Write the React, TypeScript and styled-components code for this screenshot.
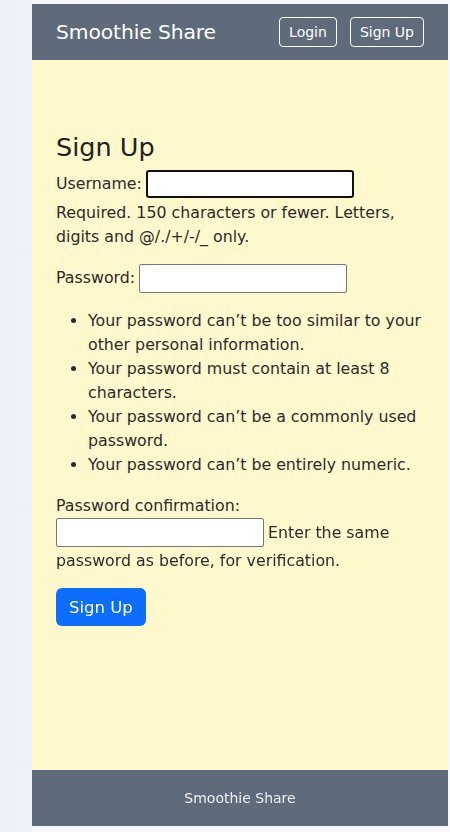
import React from "react";
import styled, { createGlobalStyle } from "styled-components";

const Global = createGlobalStyle`
  html, body { margin: 0; padding: 0; }
  body {
    background: #f6f8fc;
    font-family: "DejaVu Sans", "Liberation Sans", sans-serif;
    color: #2b2b2b;
  }
  * { box-sizing: border-box; }
`;

const Page = styled.div`
  display: flex;
  min-height: 832px;
`;

const Side = styled.div`
  width: 32px;
  flex: none;
  background: linear-gradient(90deg, #ebeff8, #eef1f8);
`;

const Main = styled.div`
  width: 416px;
  flex: none;
  display: flex;
  flex-direction: column;
  margin-top: 4px;
  margin-bottom: 6px;
`;

const Header = styled.header`
  height: 56px;
  background: #5e6b7b;
  display: flex;
  align-items: center;
  justify-content: space-between;
  padding: 0 24px;
`;

const Brand = styled.div`
  color: #ffffff;
  font-size: 20.3px;
  letter-spacing: -0.1px;
`;

const Nav = styled.nav`
  display: flex;
  gap: 13px;
  margin-top: -1px;
`;

const NavButton = styled.button`
  height: 30px;
  padding: 0 9px;
  border: 1px solid #ffffff;
  border-radius: 4px;
  background: transparent;
  color: #ffffff;
  font-family: inherit;
  font-size: 14px;
`;

const Content = styled.main`
  flex: 1;
  background: #fff8cd;
  padding: 72px 24px 24px;
  font-size: 15.8px;
  line-height: 24px;
`;

const Title = styled.h1`
  margin: 0 0 6px;
  font-size: 25.5px;
  font-weight: 400;
  line-height: 30px;
  color: #222;
`;

const Field = styled.p<{ $gap?: number }>`
  margin: 0 0 ${(p) => p.$gap ?? 16}px;
`;

const Label = styled.label<{ $block?: boolean }>`
  display: ${(p) => (p.$block ? "block" : "inline")};
  margin-right: 4px;
`;

const Input = styled.input<{ $focused?: boolean; $m?: string }>`
  width: 208px;
  height: ${(p) => (p.$focused ? "28px" : "29px")};
  vertical-align: middle;
  background: #fff;
  border: ${(p) => (p.$focused ? "2px solid #111" : "1px solid #777")};
  border-radius: ${(p) => (p.$focused ? "3px" : "2px")};
  outline: none;
  padding: 0 4px;
  font-family: inherit;
  font-size: 14px;
  margin: ${(p) => p.$m ?? "0"};
`;

const Help = styled.span`
  display: block;
`;

const InlineHelp = styled.span`
  margin-left: 4px;
`;

const Rules = styled.ul`
  margin: 1px 0 17px;
  padding-left: 32px;
`;

const Submit = styled.button`
  height: 38px;
  padding: 0 13px;
  border: none;
  border-radius: 6px;
  background: #0d6efd;
  color: #fff;
  font-family: inherit;
  font-size: 16.5px;
`;

const Footer = styled.footer`
  height: 56px;
  background: #5e6b7b;
  color: #eef0f3;
  font-size: 14px;
  display: flex;
  align-items: center;
  justify-content: center;
`;

const RightGap = styled.div`
  flex: 1;
`;

export default function App() {
  return (
    <>
      <Global />
      <Page>
        <Side />
        <Main>
          <Header>
            <Brand>Smoothie Share</Brand>
            <Nav>
              <NavButton>Login</NavButton>
              <NavButton>Sign Up</NavButton>
            </Nav>
          </Header>
          <Content>
            <Title>Sign Up</Title>
            <form onSubmit={(e) => e.preventDefault()}>
              <Field $gap={15}>
                <Label htmlFor="id_username">Username:</Label>
                <Input id="id_username" type="text" $focused $m="2px 0 3px" autoFocus />
                <Help>Required. 150 characters or fewer. Letters, digits and @/./+/-/_ only.</Help>
              </Field>
              <Field>
                <Label htmlFor="id_password1">Password:</Label>
                <Input id="id_password1" type="password" />
              </Field>
              <Rules>
                <li>Your password can’t be too similar to your other personal information.</li>
                <li>Your password must contain at least 8 characters.</li>
                <li>Your password can’t be a commonly used password.</li>
                <li>Your password can’t be entirely numeric.</li>
              </Rules>
              <Field $gap={15}>
                <Label htmlFor="id_password2" $block>Password confirmation:</Label>
                <Input id="id_password2" type="password" $m="0 0 2px" />
                <InlineHelp>Enter the same password as before, for verification.</InlineHelp>
              </Field>
              <Submit type="submit">Sign Up</Submit>
            </form>
          </Content>
          <Footer>Smoothie Share</Footer>
        </Main>
        <RightGap />
      </Page>
    </>
  );
}
